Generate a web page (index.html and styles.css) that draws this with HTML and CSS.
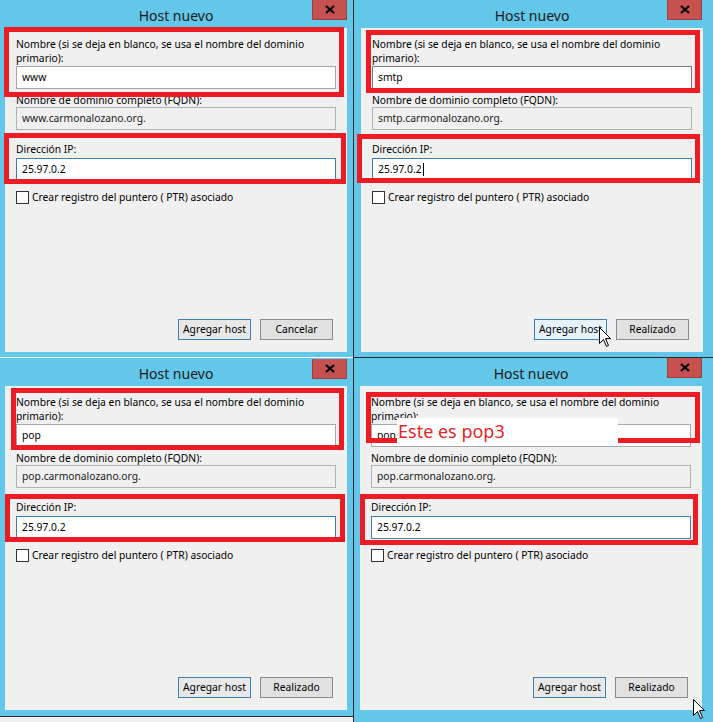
FILE: index.html
```html
<!DOCTYPE html>
<html lang="es">
<head>
<meta charset="utf-8">
<title>Host nuevo</title>
<link rel="stylesheet" href="styles.css">
</head>
<body>
<div class="screen">

  <section class="win tl">
    <header class="titlebar"><span class="title">Host nuevo</span></header>
    <span class="close"><svg width="10" height="9" viewBox="0 0 10 9"><path d="M1 1L9 8M9 1L1 8" stroke="#000" stroke-width="2.2"/></svg></span>
    <div class="body">
      <div class="lbl two">Nombre (si se deja en blanco, se usa el nombre del dominio<br>primario):</div>
      <div class="edit">www</div>
      <div class="lbl fq">Nombre de dominio completo (FQDN):</div>
      <div class="edit ro">www.carmonalozano.org.</div>
      <div class="lbl ipl">Dirección IP:</div>
      <div class="edit ip">25.97.0.2</div>
      <div class="chk"><span class="box"></span>Crear registro del puntero ( PTR) asociado</div>
      <div class="buttons"><span class="btn def">Agregar host</span><span class="btn">Cancelar</span></div>
    </div>
    <div class="mark m1"></div>
    <div class="mark m2"></div>
  </section>

  <section class="win tr">
    <header class="titlebar"><span class="title">Host nuevo</span></header>
    <span class="close"><svg width="10" height="9" viewBox="0 0 10 9"><path d="M1 1L9 8M9 1L1 8" stroke="#000" stroke-width="2.2"/></svg></span>
    <div class="body">
      <div class="lbl two">Nombre (si se deja en blanco, se usa el nombre del dominio<br>primario):</div>
      <div class="edit dark">smtp</div>
      <div class="lbl fq">Nombre de dominio completo (FQDN):</div>
      <div class="edit ro">smtp.carmonalozano.org.</div>
      <div class="lbl ipl">Dirección IP:</div>
      <div class="edit ip">25.97.0.2<span class="caret"></span></div>
      <div class="chk"><span class="box"></span>Crear registro del puntero ( PTR) asociado</div>
      <div class="buttons"><span class="btn def hover">Agregar host</span><span class="btn">Realizado</span></div>
    </div>
    <div class="mark m1"></div>
    <div class="mark m2"></div>
    <svg class="cursor" width="13" height="21" viewBox="0 0 13 21"><path d="M0.5 0.5V16.5L4.5 12.5L7.5 19.5L9.5 18.5L6.5 11.5H11.5Z" fill="#fff" stroke="#000" stroke-width="1"/></svg>
  </section>

  <section class="win bl">
    <header class="titlebar"><span class="title">Host nuevo</span></header>
    <span class="close"><svg width="10" height="9" viewBox="0 0 10 9"><path d="M1 1L9 8M9 1L1 8" stroke="#000" stroke-width="2.2"/></svg></span>
    <div class="body">
      <div class="lbl two">Nombre (si se deja en blanco, se usa el nombre del dominio<br>primario):</div>
      <div class="edit">pop</div>
      <div class="lbl fq">Nombre de dominio completo (FQDN):</div>
      <div class="edit ro">pop.carmonalozano.org.</div>
      <div class="lbl ipl">Dirección IP:</div>
      <div class="edit ip">25.97.0.2</div>
      <div class="chk"><span class="box"></span>Crear registro del puntero ( PTR) asociado</div>
      <div class="buttons"><span class="btn def">Agregar host</span><span class="btn">Realizado</span></div>
    </div>
    <div class="mark m1"></div>
    <div class="mark m2"></div>
  </section>

  <section class="win br">
    <header class="titlebar"><span class="title">Host nuevo</span></header>
    <span class="close"><svg width="10" height="9" viewBox="0 0 10 9"><path d="M1 1L9 8M9 1L1 8" stroke="#000" stroke-width="2.2"/></svg></span>
    <div class="body">
      <div class="lbl two">Nombre (si se deja en blanco, se usa el nombre del dominio<br>primario):</div>
      <div class="edit">pop</div>
      <div class="lbl fq">Nombre de dominio completo (FQDN):</div>
      <div class="edit ro">pop.carmonalozano.org.</div>
      <div class="lbl ipl">Dirección IP:</div>
      <div class="edit ip">25.97.0.2</div>
      <div class="chk"><span class="box"></span>Crear registro del puntero ( PTR) asociado</div>
      <div class="buttons"><span class="btn def">Agregar host</span><span class="btn">Realizado</span></div>
    </div>
    <div class="mark m1"></div>
    <div class="mark m2"></div>
    <div class="note">Este es pop3</div>
    <svg class="cursor" width="13" height="21" viewBox="0 0 13 21"><path d="M0.5 0.5V16.5L4.5 12.5L7.5 19.5L9.5 18.5L6.5 11.5H11.5Z" fill="#fff" stroke="#000" stroke-width="1"/></svg>
  </section>

</div>
</body>
</html>
```

FILE: styles.css
```css
* { box-sizing: border-box; }

html, body {
  margin: 0;
  padding: 0;
  background: #f0f0f0;
}

body {
  font-family: "Noto Sans", "Open Sans", sans-serif;
  font-size: 10.3px;
  color: #000;
}

.screen {
  display: grid;
  grid-template-columns: 353px 360px;
  grid-template-rows: 357px 365px;
  width: 713px;
  height: 722px;
  overflow: hidden;
  background: #f0f0f0;
}

.win {
  position: relative;
  background: #63c7e9;
  display: flex;
  flex-direction: column;
  overflow: hidden;
}

.win.tl { padding: 0 6px 5px 5px; }
.win.tr { padding: 0 10px 5px 7px; border-left: 1px solid #2b2b2b; }
.win.bl { padding: 0 6px 6px 5px; border-top: 1px solid #ffffff; border-bottom: 1px solid #2b2b2b; height: 360px; }
.win.br { padding: 0 11px 12px 6px; border-left: 1px solid #2b2b2b; border-top: 1px solid #2b2b2b; }

.titlebar {
  height: 28px;
  flex: 0 0 28px;
  display: flex;
  align-items: center;
  justify-content: center;
  padding-top: 2px;
}

.title {
  font-size: 14px;
  color: #1a1a1a;
  letter-spacing: 0;
}

.close {
  position: absolute;
  top: 0;
  right: 6px;
  width: 35px;
  height: 20px;
  background: #c75050;
  border: 1px solid #9b3f3f;
  border-top: none;
  display: flex;
  align-items: center;
  justify-content: center;
}
.tr .close, .br .close { right: 11px; }
.bl .close { top: 1px; }

.body {
  flex: 1 1 auto;
  background: #f0f0f0;
  display: flex;
  flex-direction: column;
  padding: 9px 11px 12px 11px;
}

.lbl { line-height: 14px; white-space: nowrap; }
.lbl.two { height: 28px; }
.lbl.fq { margin-top: 4px; }
.lbl.ipl { margin-top: 12px; }

.edit {
  height: 23px;
  margin-top: 1px;
  border: 1px solid #a7a7a7;
  background: #fff;
  padding: 0 5px;
  line-height: 21px;
  white-space: nowrap;
  display: flex;
  align-items: center;
}
.edit.dark { border-color: #7a7a7a; }
.edit.ro { margin-top: 0; background: #f0f0f0; border-color: #b1b1b1; color: #1a1a1a; }
.edit.ip { margin-top: 2px; border-color: #3c7fb1; }

.caret {
  display: inline-block;
  width: 1px;
  height: 13px;
  background: #000;
  margin-left: 1px;
}

.chk {
  margin-top: 9px;
  line-height: 14px;
  display: flex;
  align-items: center;
}
.box {
  width: 13px;
  height: 13px;
  border: 1px solid #333;
  background: #fff;
  margin-right: 3px;
}

.buttons {
  margin-top: auto;
  display: flex;
  justify-content: flex-end;
  gap: 9px;
  padding-right: 3px;
}
.btn {
  width: 73px;
  height: 21px;
  line-height: 19px;
  text-align: center;
  background: #e1e1e1;
  border: 1px solid #8a8a8a;
}
.btn.def { border-color: #3c7fb1; background: #e8e8e8; }
.btn.hover { background: #e5f1fb; }

.mark {
  position: absolute;
  border: 5px solid #ed1c24;
}
.tl .m1 { left: 4px; top: 27px; width: 340px; height: 70px; }
.tl .m2 { left: 4px; top: 133px; width: 342px; height: 51px; }
.tr .m1 { left: 12px; top: 30px; width: 334px; height: 63px; }
.tr .m2 { left: 3px; top: 134px; width: 343px; height: 49px; }
.bl .m1 { left: 11px; top: 30px; width: 333px; height: 62px; }
.bl .m2 { left: 5px; top: 136px; width: 340px; height: 48px; }
.br .m1 { left: 12px; top: 34px; width: 334px; height: 51px; }
.br .m2 { left: 6px; top: 136px; width: 338px; height: 51px; }

.note {
  position: absolute;
  left: 43px;
  top: 60px;
  width: 221px;
  height: 25px;
  background: #fff;
  color: #e3262a;
  font-size: 18px;
  line-height: 24px;
  padding: 1px 0 0 1px;
  white-space: nowrap;
}

.cursor { position: absolute; }
.tr .cursor { left: 245px; top: 327px; }
.br .cursor { left: 339px; top: 341px; }
```
